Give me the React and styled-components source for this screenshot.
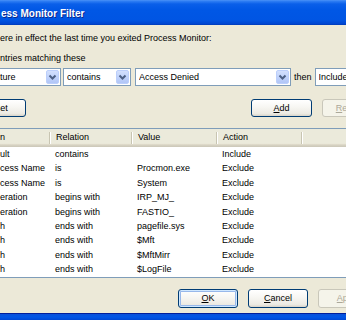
import styled, { createGlobalStyle } from 'styled-components';

const GlobalStyle = createGlobalStyle`
* {
  margin: 0;
  padding: 0;
  box-sizing: border-box;
}

body {
  background: #ece9d8;
  font-family: 'Liberation Sans', Arial, sans-serif;
  font-size: 9px;
  color: #000;
  overflow: hidden;
}
`;

const Window = styled.div`
  width: 346px;
  height: 320px;
  display: flex;
  flex-direction: column;
  overflow: hidden;
  background: #ece9d8;
`;

const TitleBar = styled.div`
  height: 25px;
  flex-shrink: 0;
  display: flex;
  align-items: center;
  padding: 2px 0 0 1px;
  color: #fff;
  font-size: 10px;
  font-weight: bold;
  text-shadow: 1px 1px 0 #0b2a8f;
  white-space: nowrap;
  background: linear-gradient(
    180deg,
    #4a92f7 0%,
    #2a7af2 6%,
    #0a5fe9 16%,
    #0057e5 40%,
    #0055e3 80%,
    #0047d2 94%,
    #003ab8 100%
  );
`;

const Body = styled.div`
  flex: 1;
  display: flex;
  flex-direction: column;
`;

const Label = styled.div`
  line-height: 12px;
  white-space: nowrap;
  margin-top: ${(p) => p.$top}px;
`;

const ComboRow = styled.div`
  display: flex;
  align-items: center;
  margin-top: 4px;
  height: 18px;
  white-space: nowrap;
`;

const Combo = styled.div`
  width: ${(p) => p.$w}px;
  margin-left: ${(p) => p.$ml || 0}px;
  flex-shrink: 0;
  height: 18px;
  display: flex;
  align-items: center;
  background: #fff;
  border: 1px solid #7f9db9;
  padding: 0 1px 0 3px;
`;

const ComboText = styled.span`
  flex: 1;
  overflow: hidden;
`;

const DropButton = styled.div`
  width: 13px;
  height: 14px;
  display: flex;
  align-items: center;
  justify-content: center;
  border: 1px solid #bccffb;
  border-radius: 2px;
  background: linear-gradient(180deg, #d3e0fd 0%, #c1d3fb 50%, #b1c6f7 100%);
`;

const ThenText = styled.span`
  margin: 0 3px;
`;

const ButtonRow = styled.div`
  display: flex;
  align-items: center;
  gap: 10px;
  margin-top: ${(p) => p.$top}px;
  margin-right: ${(p) => p.$mr}px;
  justify-content: flex-end;
`;

const Spacer = styled.div`
  flex: 1;
`;

const Button = styled.button`
  flex-shrink: 0;
  width: ${(p) => p.$w || 60}px;
  height: ${(p) => p.$h || 18}px;
  margin-left: ${(p) => p.$ml || 0}px;
  font-family: inherit;
  font-size: 9px;
  border-radius: 3px;
  border: 1px solid ${(p) => (p.disabled ? '#c9c7ba' : '#003c74')};
  color: ${(p) => (p.disabled ? '#aca899' : '#000')};
  background: ${(p) =>
    p.disabled
      ? '#f5f4ea'
      : 'linear-gradient(180deg, #ffffff 0%, #f7f6f2 45%, #eceae3 85%, #d8d3c8 100%)'};
  box-shadow: ${(p) =>
    p.$default ? 'inset 0 0 0 1px #cee7ff, inset 0 0 0 2px #98b8ea' : 'none'};

  u {
    text-decoration: underline;
  }
`;

const List = styled.div`
  margin: 11px -10px 0 -4px;
  border: 1px solid #7f9db9;
  background: #fff;
`;

const Grid = styled.div`
  display: grid;
  grid-template-columns: 53px 82px 85px 85px 1fr;
`;

const Header = styled(Grid)`
  height: 18px;
  background: linear-gradient(
    180deg,
    #ebeadb 0%,
    #ebeadb 80%,
    #e2decd 84%,
    #d6d2c2 90%,
    #cbc7b8 100%
  );
`;

const HeaderCell = styled.div`
  position: relative;
  line-height: 17px;
  padding-left: ${(p) => (p.$first ? 3 : 6)}px;
  white-space: nowrap;

  &::after {
    content: '';
    position: absolute;
    right: 0;
    top: 3px;
    bottom: 3px;
    width: 1px;
    background: #c8c5b2;
    box-shadow: 1px 0 0 #fff;
  }
`;

const Row = styled(Grid)`
  height: 14.4px;
  line-height: 14.4px;
`;

const Cell = styled.div`
  padding-left: ${(p) => (p.$first ? 3 : 5)}px;
  white-space: nowrap;
  overflow: hidden;
`;

const BottomFrame = styled.div`
  margin-top: auto;
  height: 7px;
  border-top: 1px solid #001f9c;
  background: linear-gradient(180deg, #0a4fd8 0%, #0056e6 50%, #0046d4 100%);
`;

const Chevron = () => (
  <svg width="9" height="7" viewBox="0 0 9 7">
    <path d="M1.5 1.5 L4.5 4.5 L7.5 1.5" fill="none" stroke="#4d6185" strokeWidth="2" />
  </svg>
);

const rows = [
  ['ult', 'contains', '', 'Include'],
  ['cess Name', 'is', 'Procmon.exe', 'Exclude'],
  ['cess Name', 'is', 'System', 'Exclude'],
  ['eration', 'begins with', 'IRP_MJ_', 'Exclude'],
  ['eration', 'begins with', 'FASTIO_', 'Exclude'],
  ['h', 'ends with', 'pagefile.sys', 'Exclude'],
  ['h', 'ends with', '$Mft', 'Exclude'],
  ['h', 'ends with', '$MftMirr', 'Exclude'],
  ['h', 'ends with', '$LogFile', 'Exclude'],
];

export default function App() {
  return (
    <>
      <GlobalStyle />
      <Window>
        <TitleBar>ess Monitor Filter</TitleBar>
        <Body>
          <Label $top={7}>ere in effect the last time you exited Process Monitor:</Label>
          <Label $top={8}>ntries matching these</Label>
          <ComboRow>
            <Combo $w={65} $ml={-4}>
              <ComboText>ture</ComboText>
              <DropButton>
                <Chevron />
              </DropButton>
            </Combo>
            <Combo $w={68} $ml={2}>
              <ComboText>contains</ComboText>
              <DropButton>
                <Chevron />
              </DropButton>
            </Combo>
            <Combo $w={156} $ml={4}>
              <ComboText>Access Denied</ComboText>
              <DropButton>
                <Chevron />
              </DropButton>
            </Combo>
            <ThenText>then</ThenText>
            <Combo $w={60}>
              <ComboText>Include</ComboText>
            </Combo>
          </ComboRow>
          <ButtonRow $top={13} $mr={-37}>
            <Button $ml={-34}>Reset</Button>
            <Spacer />
            <Button $w={61}>
              <u>A</u>dd
            </Button>
            <Button $w={61} disabled>
              <u>R</u>emove
            </Button>
          </ButtonRow>
          <List>
            <Header>
              <HeaderCell $first>n</HeaderCell>
              <HeaderCell>Relation</HeaderCell>
              <HeaderCell>Value</HeaderCell>
              <HeaderCell>Action</HeaderCell>
              <HeaderCell />
            </Header>
            {rows.map((r, i) => (
              <Row key={i}>
                <Cell $first>{r[0]}</Cell>
                <Cell>{r[1]}</Cell>
                <Cell>{r[2]}</Cell>
                <Cell>{r[3]}</Cell>
                <Cell />
              </Row>
            ))}
          </List>
          <ButtonRow $top={11} $mr={-32}>
            <Button $h={19} $default>
              <u>O</u>K
            </Button>
            <Button $h={19}>
              <u>C</u>ancel
            </Button>
            <Button $h={19} disabled>
              <u>A</u>pply
            </Button>
          </ButtonRow>
          <BottomFrame />
        </Body>
      </Window>
    </>
  );
}
